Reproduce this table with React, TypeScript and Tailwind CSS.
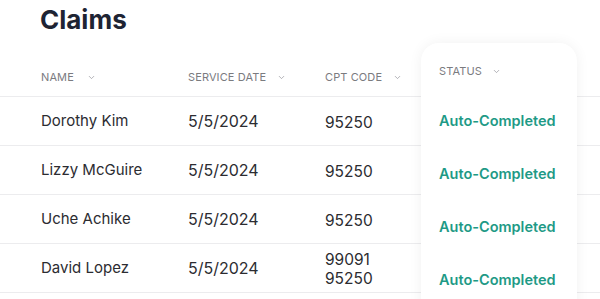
import { ChevronDown } from 'lucide-react';

const claims = [
  { name: 'Dorothy Kim', date: '5/5/2024', codes: ['95250'] },
  { name: 'Lizzy McGuire', date: '5/5/2024', codes: ['95250'] },
  { name: 'Uche Achike', date: '5/5/2024', codes: ['95250'] },
  { name: 'David Lopez', date: '5/5/2024', codes: ['99091', '95250'] },
];

function HeaderCell({ label, gap, className }: { label: string; gap: string; className: string }) {
  return (
    <div className={`flex items-center ${gap} ${className}`}>
      <span className="text-[11px] leading-[14px] text-[#7b7b7f] tracking-[0.01em]">{label}</span>
      <ChevronDown size={9} strokeWidth={2} className="text-[#9a9aa0]" />
    </div>
  );
}

export default function App() {
  return (
    <div className="w-[600px] h-[299px] overflow-hidden bg-white" style={{ fontFamily: 'Inter, "Noto Sans", sans-serif' }}>
      <div className="h-[43px] pl-[40px] pt-[4px]">
        <h1 className="text-[26px] leading-8 font-bold text-[#1e2433]">Claims</h1>
      </div>

      <div className="flex items-start">
        {/* left columns */}
        <div className="w-[421px]">
          <div className="flex h-[54px] pt-[15px] border-b border-[#ececee]">
            <HeaderCell label="NAME" gap="gap-[13px]" className="w-[188px] pl-[41px]" />
            <HeaderCell label="SERVICE DATE" gap="gap-[11px]" className="w-[137px]" />
            <HeaderCell label="CPT CODE" gap="gap-[11px]" className="flex-1" />
          </div>
          {claims.map((c) => (
            <div key={c.name} className="flex items-center h-[49px] border-b border-[#ececee] text-[#2c2c31]">
              <div className="w-[188px] pl-[41px] text-[15px] leading-5">{c.name}</div>
              <div className="w-[137px] text-[16px] leading-5">{c.date}</div>
              <div className="flex-1 flex flex-col text-[15.5px] leading-[19px] pt-[2px]">
                {c.codes.map((code) => (
                  <span key={code}>{code}</span>
                ))}
              </div>
            </div>
          ))}
        </div>

        {/* status card */}
        <div className="w-[156px] h-[300px] bg-white rounded-t-[18px] shadow-[0_0_14px_rgba(0,0,0,0.06)] relative z-10">
          <div className="h-[51px] pt-[5px] flex items-center">
            <HeaderCell label="STATUS" gap="gap-[10px]" className="pl-[18px]" />
          </div>
          {claims.map((c) => (
            <div key={c.name} className="h-[53px] flex items-center pl-[18px]">
              <span className="text-[14.5px] leading-5 font-semibold text-[#1e9a86]">Auto-Completed</span>
            </div>
          ))}
        </div>

        {/* filler on the right */}
        <div className="flex-1">
          <div className="h-[54px] border-b border-[#ececee]" />
          {claims.map((c) => (
            <div key={c.name} className="h-[49px] border-b border-[#ececee]" />
          ))}
        </div>
      </div>
    </div>
  );
}
